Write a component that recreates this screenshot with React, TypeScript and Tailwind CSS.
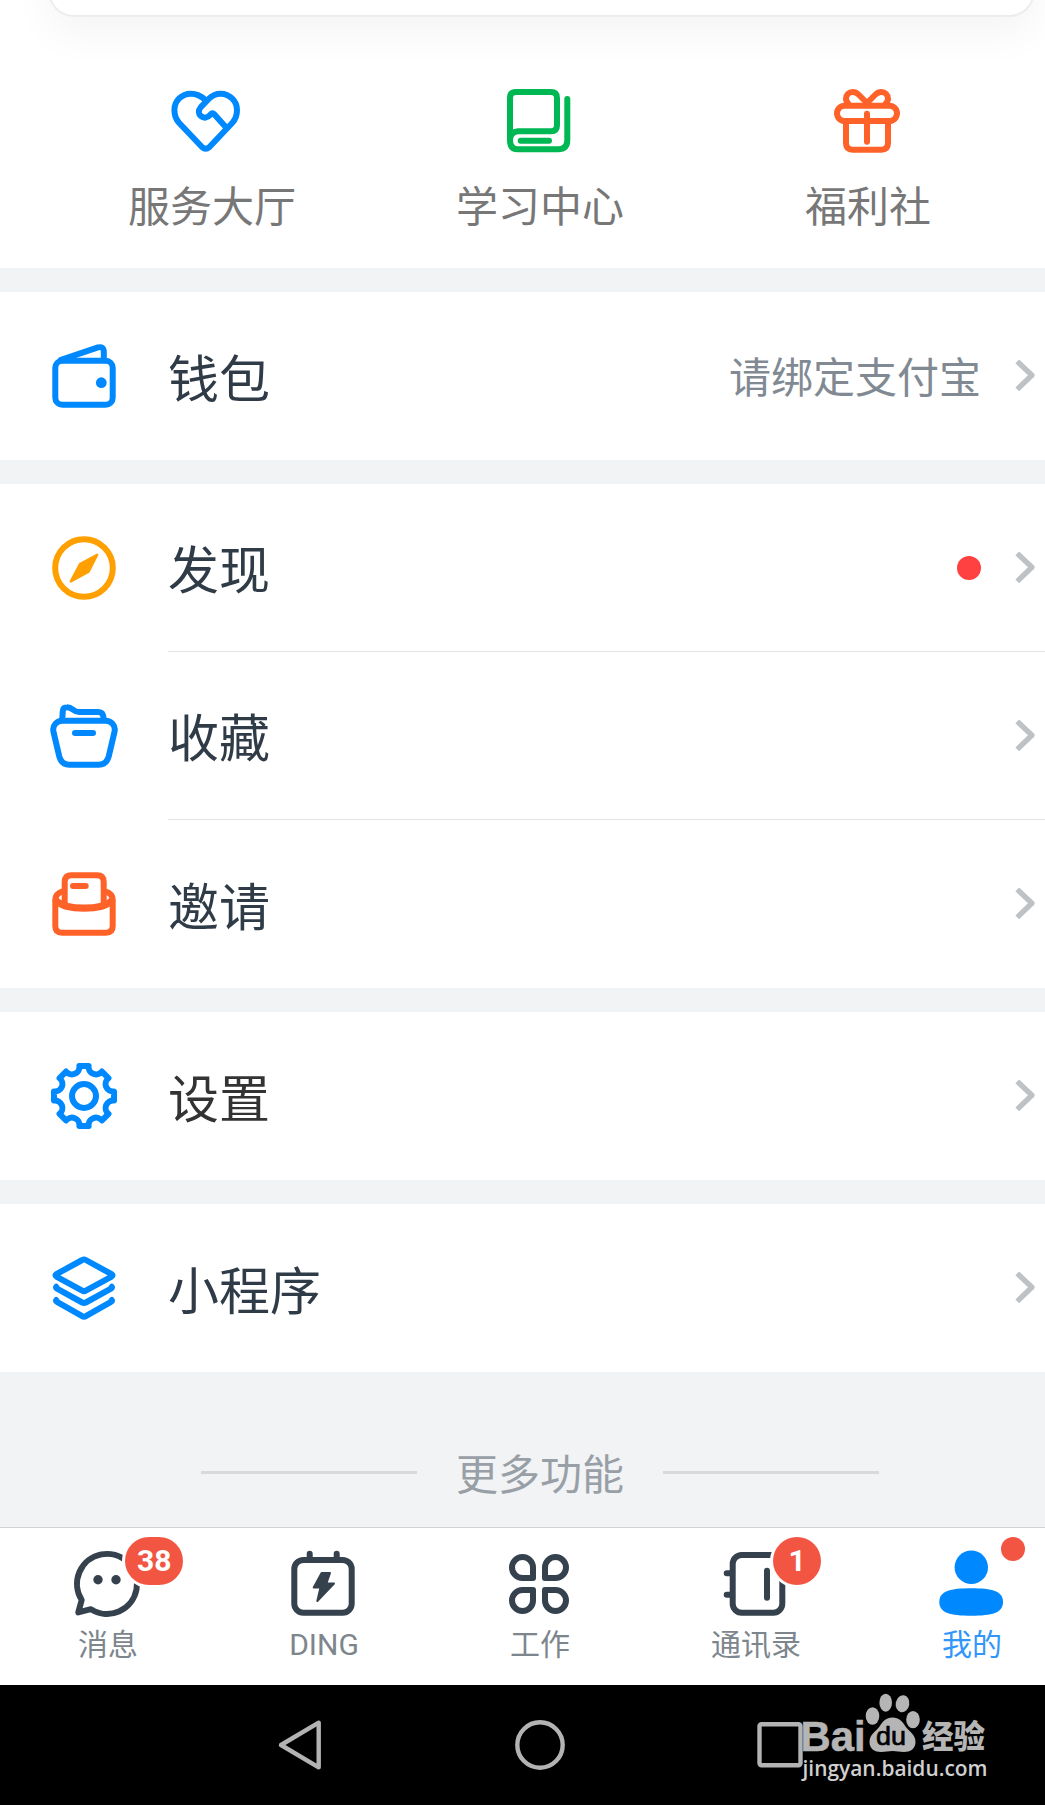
import type { ReactNode } from "react";

const BLUE = "#0089ff";
const GREEN = "#00b853";
const ORANGE = "#ff6229";
const AMBER = "#ff9f00";
const SLATE = "#35424e";

function Icon({ color, children }: { color: string; children: ReactNode }) {
  return (
    <svg
      viewBox="0 0 72 72"
      className="block size-[72px] shrink-0 overflow-visible"
      fill="none"
      stroke={color}
      strokeWidth={6}
      strokeLinecap="round"
      strokeLinejoin="round"
    >
      {children}
    </svg>
  );
}

const HeartIcon = () => (
  <Icon color={BLUE}>
    <path d="M35.7 15.2Q29 8.7 20.7 8.7A16.3 16.3 0 0 0 4.4 25C4.4 30.5 5.5 33.8 9 37.7L32.2 62.2Q35.7 65.2 39.2 62.2L62.4 37.7C66 33.8 67 30.5 67 25A16.4 16.4 0 0 0 50.4 8.7C45.5 8.7 42.5 10.3 39 13.7L30.8 22.2C28 25.3 28.3 29 31 31.2C34 33.6 37.5 32.8 39.8 30.3C41.5 28.4 42.6 27.4 44 29L55.7 42" />
  </Icon>
);

const BookIcon = () => (
  <Icon color={GREEN}>
    <path d="M6 55.3V13Q6 7 12 7H47Q53 7 53 13V40.3Q53 46.3 47 46.3H14Q6 47 6 55.3Q6 64.3 14 64.3H54Q63.3 64.3 63.3 55V14" />
    <path d="M16.7 55.7H45" />
  </Icon>
);

const GiftIcon = () => (
  <Icon color={ORANGE}>
    <rect x="5" y="20.7" width="60" height="15.3" rx="7.65" />
    <path d="M14 37V58Q14 64.7 20.7 64.7H49.3Q56 64.7 56 58V37M35 28.7V56.7" />
    <path d="M17 19.5Q14 16.5 14 13.8C14 10 17 7 20.7 7C23.2 7 25 8 26.5 9.5L35 18L43.5 9.5C45 8 46.8 7 49.3 7C53 7 56 10 56 13.8Q56 16.5 53 19.5" />
  </Icon>
);

const WalletIcon = () => (
  <Icon color={BLUE}>
    <rect x="7.3" y="20.7" width="57.4" height="44" rx="7" />
    <path d="M13 19.8L50 7.4Q55.8 6 55.8 12V20" />
    <circle cx="53.3" cy="42.7" r="5.4" fill={BLUE} stroke="none" />
  </Icon>
);

const CompassIcon = () => (
  <Icon color={AMBER}>
    <circle cx="36" cy="36" r="28.8" />
    <path d="M49.2 22.8L32 32L22.8 49.4L40.6 39.8Z" fill={AMBER} strokeWidth="2.4" />
  </Icon>
);

const FolderIcon = () => (
  <Icon color={BLUE}>
    <path d="M14.5 20.7H57.5C63 20.7 67.8 25 66.6 31.5L60.7 56.5C59.2 62 56.5 64.7 51 64.7H21C15.5 64.7 12.8 62 11.3 56.5L5.4 31.5C4.2 25 9 20.7 14.5 20.7Z" />
    <path d="M14.2 19.5L14.8 11Q15.2 7.2 19 7.2C25 7 24.5 12 31.3 12H50.5Q55.5 12 55.7 19.5" />
    <path d="M27 33H45" />
  </Icon>
);

const InviteIcon = () => (
  <Icon color={ORANGE}>
    <path d="M16.7 36V14Q16.7 7.3 23.4 7.3H49Q55.7 7.3 55.7 14V36" />
    <path d="M15.500 23.200Q7.300 25.500 7.300 32V58Q7.300 64.700 14 64.700H58Q64.700 64.700 64.700 58V32Q64.700 25.500 56.500 23.200" />
    <path d="M8.500 33C14 38.500 26 40.200 36 40.200S58 38.500 63.500 33" strokeWidth="7.2" />
    <path d="M25 18H37.7" />
  </Icon>
);

function gearPath() {
  let d = "";
  for (let i = 0; i < 8; i++) {
    const a = (i * Math.PI) / 4;
    const point = (side: number) => {
      const x = 36 + 30 * Math.sin(a) + side * 4.6 * Math.cos(a);
      const y = 36 - 30 * Math.cos(a) + side * 4.6 * Math.sin(a);
      return `${x.toFixed(2)} ${y.toFixed(2)}`;
    };
    d += i === 0 ? `M${point(-1)}` : `A7.5 7.5 0 0 0 ${point(-1)}`;
    d += `L${point(1)}`;
  }
  return `${d}A7.5 7.5 0 0 0 31.4 6Z`;
}

const GearIcon = () => (
  <Icon color={BLUE}>
    <path d={gearPath()} />
    <circle cx="36" cy="36" r="12" />
  </Icon>
);

const LayersIcon = () => (
  <Icon color={BLUE}>
    <path d="M34.2 8Q36 7 37.8 8L63.6 22.2Q65.6 23.3 63.6 24.6L37.8 38.6Q36 39.6 34.2 38.6L8.4 24.6Q6.4 23.3 8.4 22.2Z" />
    <path d="M8.2 34.8Q7.4 35.6 9 36.6L34.2 50.5Q36 51.4 37.8 50.5L63 36.6Q64.6 35.6 63.8 34.8" />
    <path d="M8.2 48Q7.4 48.8 9 49.8L34.2 64.2Q36 65.1 37.8 64.2L63 49.8Q64.6 48.8 63.8 48" />
  </Icon>
);

const Chevron = () => (
  <svg viewBox="0 0 21 32" className="block h-8 w-[21px] shrink-0" fill="none" stroke="#bfc2c5" strokeWidth="5.400" strokeLinejoin="round">
    <path d="M2.2 1.4L16.9 15.3L2.2 29.4" />
  </svg>
);

function Row({ icon, label, divider, children, plain }: { icon: ReactNode; label: string; divider?: boolean; plain?: boolean; children?: ReactNode }) {
  return (
    <div className="flex h-[168px] items-center bg-white pl-12">
      {icon}
      <div className={`ml-12 flex h-full flex-1 items-center pr-[9px] ${divider ? "border-b border-[#e2e4e6]" : ""}`}>
        <span className={`pt-[9px] text-[51px] leading-[72px] ${plain ? "text-[#333333]" : "text-[#2f3b47]"}`}>{label}</span>
        <div className="ml-auto mr-[34px] flex items-center">{children}</div>
        <Chevron />
      </div>
    </div>
  );
}

function Shortcut({ icon, label }: { icon: ReactNode; label: string }) {
  return (
    <div className="flex flex-col items-center">
      {icon}
      <span className="mt-[21px] text-[42px] leading-[60px] text-[#777777]">{label}</span>
    </div>
  );
}

function Tab({ icon, label, active, badge }: { icon: ReactNode; label: string; active?: boolean; badge?: ReactNode }) {
  return (
    <div className="relative flex flex-1 flex-col items-center pt-5">
      {icon}
      <span className={`mt-[3px] text-[30px] leading-[44px] ${active ? "text-[#3296fa]" : "text-[#7d858d]"}`}>{label}</span>
      {badge}
    </div>
  );
}

function Badge({ children }: { children: string }) {
  return (
    <span className="absolute left-[125px] top-[9px] flex h-12 min-w-12 items-center justify-center rounded-full bg-[#f35543] px-3 font-[Roboto] text-[30px] leading-none font-bold text-white ring-3 ring-white">
      {children}
    </span>
  );
}

const MessageIcon = () => (
  <Icon color={SLATE}>
    <path d="M9.7 52A30 30 0 1 1 18.9 61.2L6.3 64.4Z" />
    <circle cx="26" cy="31.7" r="4.7" fill={SLATE} stroke="none" />
    <circle cx="44" cy="31.7" r="4.7" fill={SLATE} stroke="none" />
  </Icon>
);

const DingIcon = () => (
  <Icon color={SLATE}>
    <rect x="6.3" y="12" width="57.4" height="52.7" rx="9" />
    <path d="M21.7 5.7V11M48.7 5.7V11" />
    <path d="M33.6 25H42L38.4 35.5H46L29.3 53L32.5 39.4H25.7Z" fill={SLATE} strokeWidth="2" />
  </Icon>
);

const WorkIcon = () => (
  <Icon color={SLATE}>
    <path d="M18.5 9A10.5 10.5 0 0 0 18.5 30H29V19.5A10.5 10.5 0 0 0 18.5 9Z" />
    <path d="M51.5 9A10.5 10.5 0 0 1 51.5 30H41V19.5A10.5 10.5 0 0 1 51.5 9Z" />
    <path d="M18.5 63A10.5 10.5 0 0 1 18.5 42H29V52.5A10.5 10.5 0 0 1 18.5 63Z" />
    <path d="M51.5 63A10.5 10.5 0 0 0 51.5 42H41V52.5A10.5 10.5 0 0 0 51.5 63Z" />
  </Icon>
);

const ContactsIcon = () => (
  <Icon color={SLATE}>
    <rect x="12.7" y="7" width="49.6" height="57.7" rx="9" />
    <path d="M6.7 25.3H12M6.7 46.7H12M47 22.7V49.7" />
  </Icon>
);

const MeIcon = () => (
  <Icon color="none">
    <circle cx="35.3" cy="19.3" r="16.7" fill={BLUE} />
    <path d="M35.2 40.3C56 40.3 67 43 67 54S56 67.7 35.2 67.7S3.3 65 3.3 54S14.4 40.3 35.2 40.3Z" fill={BLUE} />
  </Icon>
);

const Watermark = () => (
  <svg viewBox="0 0 200 100" className="absolute left-[797px] top-0 h-[100px] w-[200px]" fill="#b5b5b5">
    <text x="3.5" y="66" fontFamily="Liberation Sans" fontWeight="700" fontSize="43" textLength="65" lengthAdjust="spacingAndGlyphs" stroke="#b5b5b5" strokeWidth="0.6">Bai</text>
    <ellipse cx="75.5" cy="31" rx="6.8" ry="8.8" />
    <ellipse cx="88.7" cy="17.7" rx="6.3" ry="9" />
    <ellipse cx="105.5" cy="18.7" rx="6.8" ry="8.6" transform="rotate(10 105.5 18.7)" />
    <ellipse cx="116" cy="34.7" rx="6.8" ry="8.6" />
    <path d="M95.5 32.5C102 32.5 105 36 108.5 41.5C112 46.500 118.500 49 118.500 57C118.500 64 113 67 107 67C102 67 100 66 95.500 66S89 67 84 67C78 67 72.500 64 72.500 57C72.500 49 79 46.500 82.500 41.500C86 36 89 32.500 95.500 32.500Z" />
    <text x="79" y="60" fill="#000" stroke="#000" strokeWidth="0.7" fontFamily="Liberation Sans" fontSize="26" textLength="30" lengthAdjust="spacingAndGlyphs">du</text>
    <text x="125" y="63" fontFamily="Noto Sans CJK SC" fontWeight="900" fontSize="32" textLength="63" lengthAdjust="spacingAndGlyphs">经验</text>
    <text x="5.5" y="91" fill="#d0d0d0" fontFamily="Open Sans" fontWeight="600" fontSize="22" textLength="185" lengthAdjust="spacingAndGlyphs">jingyan.baidu.com</text>
  </svg>
);

export default function App() {
  return (
    <div className="flex h-[1805px] w-[1045px] flex-col overflow-hidden bg-[#f2f3f5] font-['Roboto','Noto_Sans_CJK_SC',sans-serif]">
      <section className="h-[268px] shrink-0 overflow-hidden bg-white">
        <div className="-mt-[100px] ml-12 mr-[10px] h-[117px] rounded-b-[26px] border-x-2 border-b-2 border-[#ebeeed] bg-white shadow-[0_18px_40px_0_rgba(0,0,0,0.045)]" />
        <div className="ml-12 mt-[68px] grid w-[984px] grid-cols-3">
          <Shortcut icon={<div className="mr-3"><HeartIcon /></div>} label="服务大厅" />
          <Shortcut icon={<BookIcon />} label="学习中心" />
          <Shortcut icon={<GiftIcon />} label="福利社" />
        </div>
      </section>

      <main className="mt-6 flex flex-col gap-6">
        <Row icon={<WalletIcon />} label="钱包">
          <span className="pt-[5px] text-[42px] leading-[60px] text-[#818a93]">请绑定支付宝</span>
        </Row>
        <div>
          <Row icon={<CompassIcon />} label="发现" divider>
            <span className="size-6 rounded-full bg-[#ff4141]" />
          </Row>
          <Row icon={<FolderIcon />} label="收藏" divider />
          <Row icon={<InviteIcon />} label="邀请" />
        </div>
        <Row icon={<GearIcon />} label="设置" plain />
        <Row icon={<LayersIcon />} label="小程序" />
      </main>

      <div className="flex h-[155px] w-[1080px] shrink-0 items-center justify-center gap-[39px] pt-[46px]">
        <div className="h-[3px] w-[216px] bg-[#d7d9db]" />
        <span className="pt-[6px] text-[42px] leading-[60px] text-[#989fa6]">更多功能</span>
        <div className="h-[3px] w-[216px] bg-[#d7d9db]" />
      </div>

      <nav className="h-[158px] shrink-0 border-t border-[#d0d2d3] bg-white">
        <div className="flex w-[1080px]">
          <Tab icon={<MessageIcon />} label="消息" badge={<Badge>38</Badge>} />
          <Tab icon={<DingIcon />} label="DING" />
          <Tab icon={<WorkIcon />} label="工作" />
          <Tab icon={<ContactsIcon />} label="通讯录" badge={<Badge>1</Badge>} />
          <Tab
            icon={<MeIcon />}
            label="我的"
            active
            badge={<span className="absolute left-[137px] top-[9px] size-6 rounded-full bg-[#f35543]" />}
          />
        </div>
      </nav>

      <footer className="relative h-[120px] shrink-0 bg-black">
        <div className="flex h-full w-[1080px] items-center justify-center gap-[180px]">
          <svg viewBox="0 0 60 60" className="size-[60px]" fill="none" stroke="#b3b3b3" strokeWidth="4.4" strokeLinejoin="round">
            <path d="M11 30L48.7 7.7V52.3Z" />
          </svg>
          <svg viewBox="0 0 60 60" className="size-[60px]" fill="none" stroke="#b3b3b3" strokeWidth="4.4">
            <circle cx="30" cy="30" r="22.7" />
          </svg>
          <svg viewBox="0 0 60 60" className="size-[60px]" fill="none" stroke="#b3b3b3" strokeWidth="4.4">
            <rect x="9.5" y="9.2" width="41" height="41" rx="2" />
          </svg>
        </div>
        <Watermark />
      </footer>
    </div>
  );
}
